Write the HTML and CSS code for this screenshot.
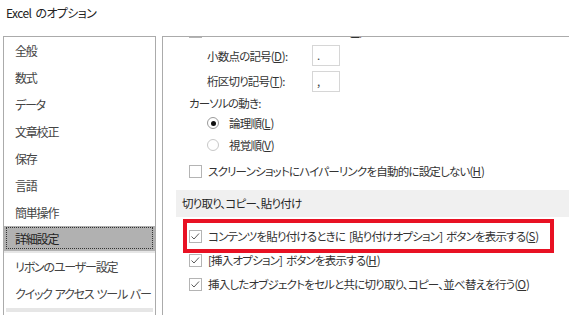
FILE: index.html
```html
<!DOCTYPE html>
<html lang="ja">
<head>
<meta charset="utf-8">
<title>Excel のオプション</title>
<link rel="stylesheet" href="styles.css">
</head>
<body>
<div class="title">Excel のオプション</div>
<div class="main">
  <nav class="side">
    <div class="item">全般</div>
    <div class="item">数式</div>
    <div class="item">データ</div>
    <div class="item">文章校正</div>
    <div class="item">保存</div>
    <div class="item">言語</div>
    <div class="item">簡単操作</div>
    <div class="item selected"><span class="focus">詳細設定</span></div>
    <div class="item">リボンのユーザー設定</div>
    <div class="item">クイック アクセス ツール バー</div>
    <div class="item end"></div>
  </nav>
  <section class="content">
    <div class="scroll">
      <div class="row r0"><span class="cb"></span><span>システムの桁区切りを使用する(<u>U</u>)</span></div>
      <div class="row r1 field"><span class="lbl">小数点の記号(<u>D</u>):</span><span class="input">.</span></div>
      <div class="row r2 field"><span class="lbl">桁区切り記号(<u>T</u>):</span><span class="input">,</span></div>
      <div class="row r3">カーソルの動き:</div>
      <div class="row radio-row"><span class="radio on"></span><span>論理順(<u>L</u>)</span></div>
      <div class="row radio-row"><span class="radio"></span><span>視覚順(<u>V</u>)</span></div>
      <div class="row r6"><span class="cb"></span><span>スクリーンショットにハイパーリンクを自動的に設定しない(<u>H</u>)</span></div>
      <div class="section">切り取り、コピー、貼り付け</div>
      <div class="checks">
        <div class="row chk"><span class="cb checked"><svg viewBox="0 0 13 13" width="13" height="13"><polyline points="2.5,6.5 5,9 10,3.5" fill="none" stroke="#5a5a5a" stroke-width="1"/></svg></span><span>コンテンツを貼り付けるときに [貼り付けオプション] ボタンを表示する(<u>S</u>)</span></div>
        <div class="row chk"><span class="cb checked"><svg viewBox="0 0 13 13" width="13" height="13"><polyline points="2.5,6.5 5,9 10,3.5" fill="none" stroke="#5a5a5a" stroke-width="1"/></svg></span><span>[挿入オプション] ボタンを表示する(<u>H</u>)</span></div>
        <div class="row chk"><span class="cb checked"><svg viewBox="0 0 13 13" width="13" height="13"><polyline points="2.5,6.5 5,9 10,3.5" fill="none" stroke="#5a5a5a" stroke-width="1"/></svg></span><span>挿入したオブジェクトをセルと共に切り取り、コピー、並べ替えを行う(<u>O</u>)</span></div>
        <div class="highlight"></div>
      </div>
    </div>
  </section>
</div>
</body>
</html>
```
FILE: styles.css
```css
* { box-sizing: border-box; }
html, body { margin: 0; padding: 0; background: #fff; }
body {
  width: 569px;
  height: 315px;
  overflow: hidden;
  font-family: "Noto Sans CJK JP", "Noto Sans", sans-serif;
  font-feature-settings: "palt";
  font-size: 11.5px;
  letter-spacing: -0.8px;
  word-spacing: 2px;
  color: #333;
}
u { text-underline-offset: 1px; letter-spacing: 0; }
.title {
  height: 36px;
  padding: 4px 0 0 6px;
  line-height: 18px;
  font-size: 12px;
  color: #222;
  letter-spacing: -0.6px;
}
.main {
  display: flex;
  gap: 6px;
  padding-left: 3px;
  height: 279px;
  overflow: hidden;
}
.side {
  width: 153px;
  flex: none;
  border: 1px solid #ababab;
  border-bottom: none;
  display: flex;
  flex-direction: column;
  color: #444;
  font-size: 12px;
  letter-spacing: -1.2px;
  word-spacing: 1.5px;
}
.item {
  height: 27px;
  line-height: 27px;
  padding-left: 11px;
  white-space: nowrap;
}
.item.selected {
  background: #b1b1b1;
  padding: 1px 2px 2px 2px;
  height: 27px;
  border-bottom: 2px solid #e6e6e6;
  color: #222;
}
.focus {
  display: block;
  height: 22px;
  line-height: 21px;
  padding-left: 8px;
  border: 1px dotted #333;
}
.item.end {
  height: 4px;
  margin: 1px 2px 0;
  background: #e6e6e6;
}
.content {
  flex: 1;
  border-top: 1px solid #ababab;
  border-left: 1px solid #ababab;
  overflow: hidden;
}
.scroll {
  margin-top: -18px;
  padding-left: 26px;
  position: relative;
}
.row {
  display: flex;
  align-items: center;
  white-space: nowrap;
  gap: 6px;
}
.r0 { height: 24px; }
.r1 { height: 25px; }
.r2 { height: 26px; }
.field { padding-left: 18px; }
.lbl { width: 99px; }
.input {
  width: 28px;
  height: 21px;
  border: 1px solid #d6d6d6;
  padding-left: 4px;
  line-height: 18px;
  color: #444;
}
.r3 { height: 18px; }
.radio-row { height: 22px; padding-left: 18px; gap: 10px; }
.radio {
  width: 12px;
  height: 12px;
  border-radius: 50%;
  border: 1px solid #c8c8c8;
  position: relative;
  flex: none;
}
.radio.on { border-color: #9a9a9a; }
.radio.on::after {
  content: "";
  position: absolute;
  left: 2.5px;
  top: 2.5px;
  width: 5px;
  height: 5px;
  border-radius: 50%;
  background: #111;
}
.r6 { height: 30px; }
.cb {
  width: 13px;
  height: 13px;
  border: 1px solid #b4b4b4;
  flex: none;
  position: relative;
}
.cb svg { position: absolute; left: -1px; top: -1px; }
.section {
  margin: 4px 0 0 -13px;
  height: 27px;
  line-height: 27px;
  background: #f0f0f0;
  padding-left: 6px;
  color: #262626;
}
.checks {
  position: relative;
  margin-top: 7px;
}
.chk { height: 24px; }
.highlight {
  position: absolute;
  left: -6px;
  top: -5px;
  width: 371px;
  height: 34px;
  border: 4px solid #e81123;
}
```
